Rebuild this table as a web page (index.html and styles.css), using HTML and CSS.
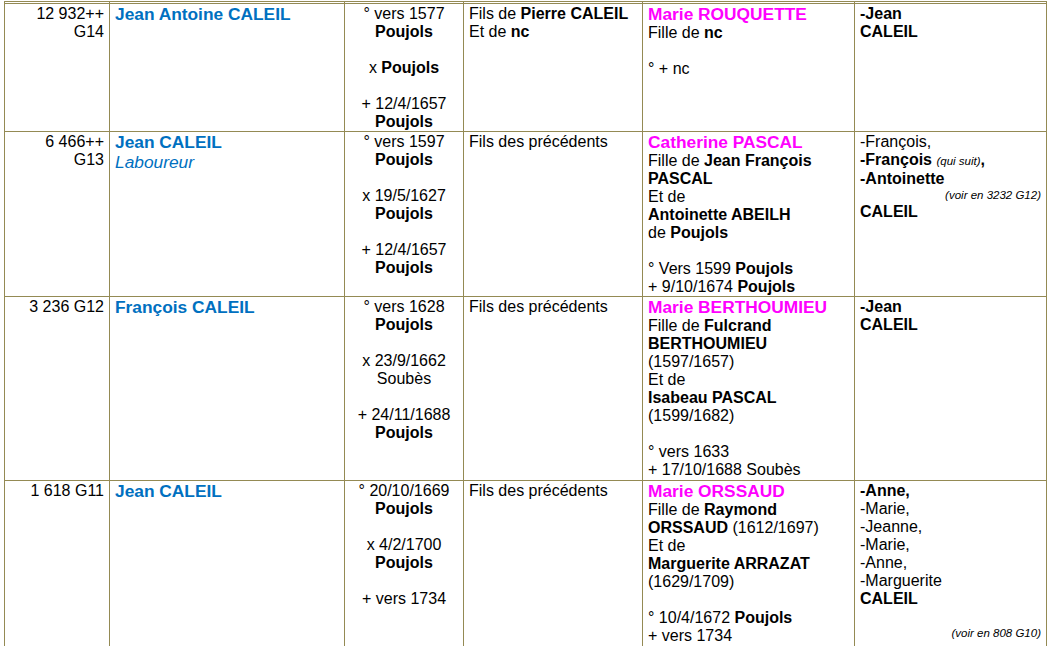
FILE: index.html
```html
<!DOCTYPE html>
<html lang="fr">
<head>
<meta charset="utf-8">
<title>Généalogie CALEIL</title>
<link rel="stylesheet" href="styles.css">
</head>
<body>
<table class="genea">
  <colgroup>
    <col class="c-num"><col class="c-name"><col class="c-dates"><col class="c-par"><col class="c-sp"><col class="c-kids">
  </colgroup>
  <tr class="stub"><td></td><td></td><td></td><td></td><td></td><td></td></tr>
  <tr class="r1">
    <td class="num">12 932++<br>G14</td>
    <td><div class="nm">Jean Antoine CALEIL</div></td>
    <td class="dates">° vers 1577<br><b>Poujols</b><br><br>x <b>Poujols</b><br><br>+ 12/4/1657<br><b>Poujols</b></td>
    <td>Fils de <b>Pierre CALEIL</b><br>Et de <b>nc</b></td>
    <td><div class="sp">Marie ROUQUETTE</div>Fille de <b>nc</b><br><br>° + nc</td>
    <td><b>-Jean<br>CALEIL</b></td>
  </tr>
  <tr class="r2">
    <td class="num">6 466++<br>G13</td>
    <td><div class="nm">Jean CALEIL</div><div class="job">Laboureur</div></td>
    <td class="dates">° vers 1597<br><b>Poujols</b><br><br>x 19/5/1627<br><b>Poujols</b><br><br>+ 12/4/1657<br><b>Poujols</b></td>
    <td>Fils des précédents</td>
    <td><div class="sp">Catherine PASCAL</div>Fille de <b>Jean François<br>PASCAL</b><br>Et de<br><b>Antoinette ABEILH</b><br>de <b>Poujols</b><br><br>° Vers 1599 <b>Poujols</b><br>+ 9/10/1674 <b>Poujols</b></td>
    <td>-François,<br><b>-François</b> <i class="small">(qui suit)</i><b>,</b><br><b>-Antoinette</b><div class="note">(voir en 3232 G12)</div><b>CALEIL</b></td>
  </tr>
  <tr class="r3">
    <td class="num">3 236 G12</td>
    <td><div class="nm">François CALEIL</div></td>
    <td class="dates">° vers 1628<br><b>Poujols</b><br><br>x 23/9/1662<br>Soubès<br><br>+ 24/11/1688<br><b>Poujols</b></td>
    <td>Fils des précédents</td>
    <td><div class="sp">Marie BERTHOUMIEU</div>Fille de <b>Fulcrand<br>BERTHOUMIEU</b><br>(1597/1657)<br>Et de<br><b>Isabeau PASCAL</b><br>(1599/1682)<br><br>° vers 1633<br>+ 17/10/1688 Soubès</td>
    <td><b>-Jean<br>CALEIL</b></td>
  </tr>
  <tr class="r4">
    <td class="num">1 618 G11</td>
    <td><div class="nm">Jean CALEIL</div></td>
    <td class="dates">° 20/10/1669<br><b>Poujols</b><br><br>x 4/2/1700<br><b>Poujols</b><br><br>+ vers 1734</td>
    <td>Fils des précédents</td>
    <td><div class="sp">Marie ORSSAUD</div>Fille de <b>Raymond<br>ORSSAUD</b> (1612/1697)<br>Et de<br><b>Marguerite ARRAZAT</b><br>(1629/1709)<br><br>° 10/4/1672 <b>Poujols</b><br>+ vers 1734</td>
    <td><b>-Anne,</b><br>-Marie,<br>-Jeanne,<br>-Marie,<br>-Anne,<br>-Marguerite<br><b>CALEIL</b><br><br><div class="note">(voir en 808 G10)</div></td>
  </tr>
</table>
</body>
</html>
```

FILE: styles.css
```css
body {
  margin: 0;
  background: #ffffff;
  color: #000000;
  font-family: "Liberation Sans", Arial, sans-serif;
  font-size: 16px;
}

.genea {
  border-collapse: collapse;
  table-layout: fixed;
  width: 1042px;
  margin: 1px 0 0 4px;
}

.c-num { width: 105px; }
.c-name { width: 235px; }
.c-dates { width: 119px; }
.c-par { width: 179px; }
.c-sp { width: 212px; }
.c-kids { width: 192px; }

.genea td {
  border: 1px solid #948a54;
  vertical-align: top;
  padding: 1px 5px 0;
  line-height: 18px;
}

.stub td {
  height: 1px;
  padding: 0;
  line-height: 1px;
  font-size: 1px;
}

.r1 { height: 128px; }
.r2 { height: 164px; }
.r3 { height: 184px; }
.r4 { height: 180px; }

.num { text-align: right; }
.dates { text-align: center; }

.nm {
  color: #0070c0;
  font-weight: bold;
  font-size: 17.33px;
  line-height: 19px;
}

.job {
  color: #0070c0;
  font-style: italic;
  font-size: 17.33px;
  line-height: 21px;
}

.sp {
  color: #ff00ff;
  font-weight: bold;
  font-size: 17.33px;
  line-height: 19px;
}

.small {
  font-size: 11.5px;
  font-style: italic;
}

.note {
  font-size: 11.5px;
  font-style: italic;
  text-align: right;
  line-height: 15px;
}
```
